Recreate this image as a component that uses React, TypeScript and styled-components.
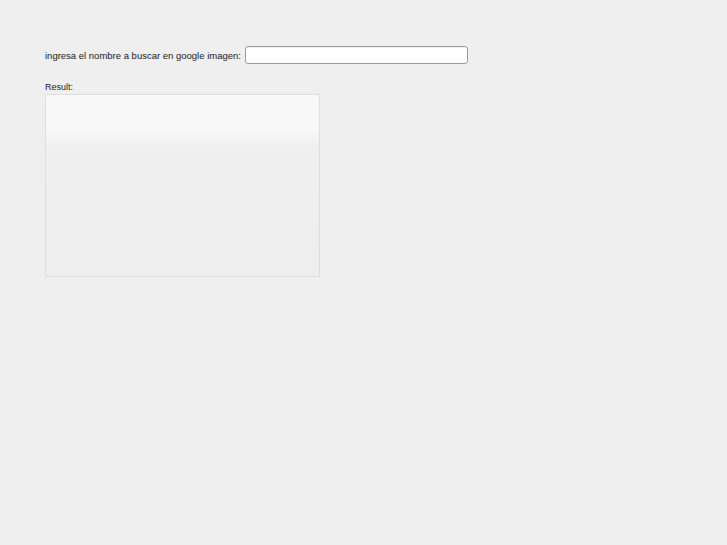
import React from "react";
import styled, { createGlobalStyle } from "styled-components";

const Global = createGlobalStyle`
  html, body { margin: 0; padding: 0; background: #efefef; }
  body { font-family: "Liberation Sans", Arial, sans-serif; color: #1a1a1a; }
`;

const Page = styled.div`
  padding: 46px 0 0 45px;
  display: flex;
  flex-direction: column;
`;

const SearchRow = styled.div`
  display: flex;
  align-items: center;
  gap: 4px;
  height: 18px;
`;

const Label = styled.label`
  font-size: 9.5px;
  line-height: 11px;
  color: #1a1a1a;
  white-space: nowrap;
  padding-top: 1px;
`;

const Input = styled.input`
  box-sizing: border-box;
  width: 223px;
  height: 18px;
  margin: 0;
  padding: 0 4px;
  border: 1px solid #9a9a9a;
  border-radius: 3px;
  background: #ffffff;
  box-shadow: inset 0 1px 1px rgba(0,0,0,0.06);
  font-family: "Liberation Sans", Arial, sans-serif;
  font-size: 9px;
  outline: none;
`;

const ResultLabel = styled.div`
  margin-top: 18px;
  font-size: 9px;
  line-height: 11px;
  height: 12px;
`;

const ResultBox = styled.div`
  box-sizing: border-box;
  width: 275px;
  height: 183px;
  border: 1px solid #dedede;
  background: linear-gradient(to bottom, #f9f9f9 0px, #f8f8f8 34px, #efefef 52px, #eeeeee 100%);
`;

export default function App() {
  return (
    <>
      <Global />
      <Page>
        <SearchRow>
          <Label htmlFor="q">ingresa el nombre a buscar en google imagen:</Label>
          <Input id="q" type="text" />
        </SearchRow>
        <ResultLabel>Result:</ResultLabel>
        <ResultBox />
      </Page>
    </>
  );
}
